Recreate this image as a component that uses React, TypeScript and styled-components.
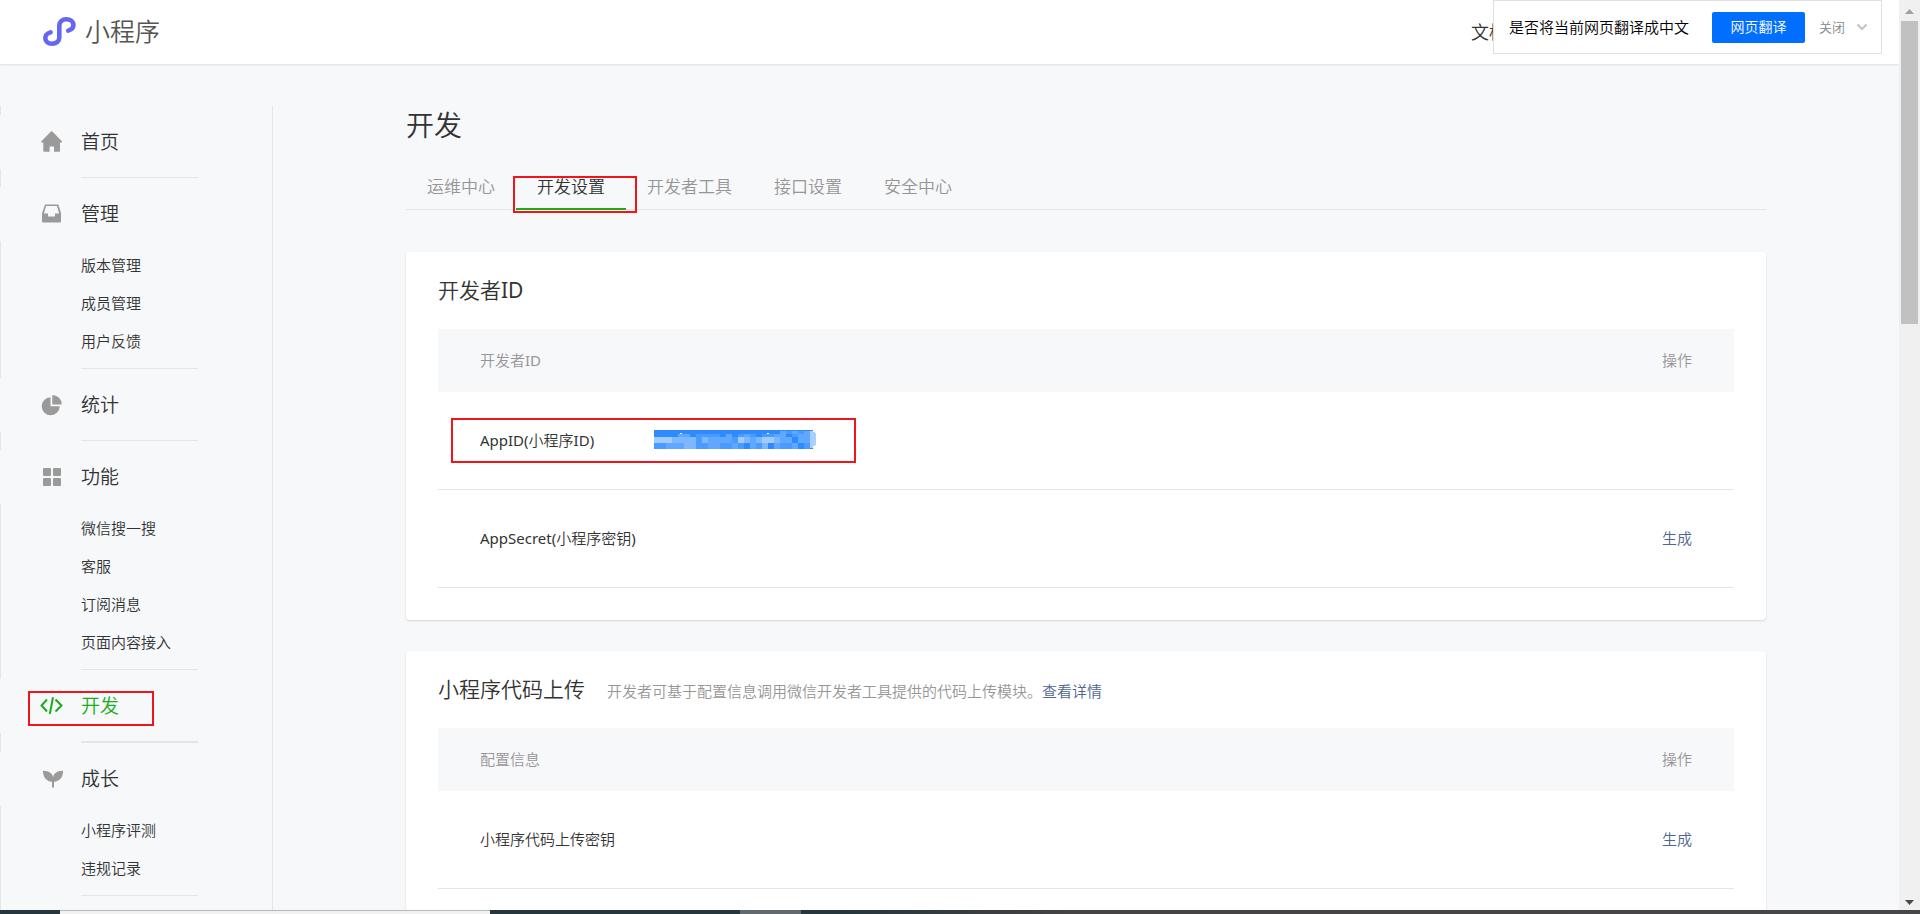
import React from "react";
import styled, { createGlobalStyle, css } from "styled-components";

const color = {
  page: "#f7f8fa",
  line: "#e4e5e8",
  text: "#333",
  muted: "#969696",
  green: "#1aad19",
  link: "#4f6592",
  mark: "#f0141b",
};

const GlobalStyle = createGlobalStyle`
  * { box-sizing: border-box; }
  body {
    margin: 0;
    background: ${color.page};
    color: ${color.text};
    font-family: "Noto Sans", "Noto Sans CJK SC", sans-serif;
    font-size: 15px;
    font-weight: 350;
    line-height: 20px;
  }
  a { color: inherit; text-decoration: none; }
  h1, h2, p, ul { margin: 0; padding: 0; font-weight: inherit; }
  ul { list-style: none; }
  button { font: inherit; border: 0; background: none; padding: 0; cursor: pointer; }
`;

/* Latin runs carry a regular weight beside the lighter Chinese text */
const Latin = styled.span`
  font-weight: 400;
`;

const Screen = styled.div`
  display: flex;
  flex-direction: column;
  height: 100vh;
  overflow: hidden;
`;

const Viewport = styled.div`
  flex: 1;
  min-height: 0;
  display: flex;
`;

const Page = styled.div`
  flex: 1;
  min-width: 0;
  overflow: hidden;
  position: relative;
`;

/* header */
const Header = styled.header`
  display: flex;
  align-items: center;
  justify-content: space-between;
  height: 64px;
  padding: 0 392px 0 42px;
  background: #fff;
  box-shadow: 0 1px 2px rgba(0, 0, 0, 0.1);
`;

const Brand = styled.a`
  display: flex;
  align-items: center;
  gap: 8px;
  height: 62px;
  align-self: flex-start;
  font-size: 25px;
  line-height: 36px;
  color: #555;
`;

const DocLink = styled.a`
  font-size: 18px;
  white-space: nowrap;
`;

const TranslateBar = styled.aside`
  position: absolute;
  top: 0;
  right: 17px;
  display: flex;
  align-items: center;
  height: 54px;
  padding: 0 13px 0 15px;
  background: #fff;
  border: 1px solid #e0e0e0;
  color: #000;
`;

const TranslateButton = styled.button`
  width: 93px;
  height: 31px;
  margin: 0 14px 0 23px;
  border-radius: 2px;
  background: #006eff;
  color: #fff;
  font-size: 14px;
`;

const CloseButton = styled.button`
  margin-right: 11px;
  color: #858585;
  font-size: 13px;
`;

const IconButton = styled.button`
  display: flex;
`;

/* layout */
const Columns = styled.div`
  display: flex;
  padding-top: 42px;
`;

const Sidebar = styled.nav`
  flex: none;
  width: 273px;
  padding-top: 9px;
  border-left: 1px solid ${color.line};
  border-right: 1px solid ${color.line};
  min-height: 100vh;
`;

const Group = styled.section`
  padding-bottom: 9px;
`;

const GroupLink = styled.a<{ $active?: boolean }>`
  position: relative;
  display: flex;
  align-items: center;
  gap: 17px;
  height: 54px;
  margin-left: -1px;
  padding-left: 40px;
  background: ${color.page};
  font-size: 19px;
  color: ${(p) => (p.$active ? color.green : color.text)};
`;

const SubList = styled.ul`
  padding: 5px 0 1px 80px;
`;

const SubLink = styled.a`
  display: block;
  line-height: 38px;
`;

const Rule = styled.hr<{ $active?: boolean; $afterList?: boolean }>`
  width: 117px;
  margin: ${(p) => (p.$afterList ? 7 : 8)}px 0 0 80px;
  border: 0;
  border-top: ${(p) => (p.$active ? 2 : 1)}px solid ${color.line};
`;

const Mark = styled.span<{ $box: "menu" | "tab" | "row" }>`
  position: absolute;
  border: 2px solid ${color.mark};
  pointer-events: none;
  ${(p) => p.$box === "menu" && css`left: 28px; top: 12px; width: 126px; height: 35px;`}
  ${(p) => p.$box === "tab" && css`left: -3px; top: 9px; width: 124px; height: 37px;`}
  ${(p) => p.$box === "row" && css`left: 13px; top: 26px; width: 405px; height: 45px;`}
`;

const Main = styled.main`
  flex: 1;
  min-width: 0;
  max-width: 1424px;
  margin: 0 auto;
  padding: 0 32px;
`;

const PageTitle = styled.h1`
  font-size: 28px;
  line-height: 38px;
`;

const Tabs = styled.nav`
  display: flex;
  height: 43px;
  margin-top: 23px;
  border-bottom: 1px solid ${color.line};
`;

const Tab = styled.a<{ $active?: boolean }>`
  position: relative;
  height: 43px;
  padding: 0 21px;
  font-size: 17px;
  line-height: 40px;
  color: ${(p) => (p.$active ? color.text : color.muted)};
  border-bottom: 2px solid ${(p) => (p.$active ? color.green : "transparent")};
`;

const Cards = styled.div`
  display: flex;
  flex-direction: column;
  gap: 31px;
  padding-top: 42px;
`;

const Card = styled.section`
  padding: 0 32px 32px;
  background: #fff;
  border-radius: 4px;
  box-shadow: 0 1px 2px rgba(0, 0, 0, 0.15);
`;

const CardHead = styled.div`
  display: flex;
  align-items: baseline;
  gap: 22px;
  height: 77px;
  line-height: 77px;
`;

const CardTitle = styled.h2`
  font-size: 21px;
`;

const CardNote = styled.p`
  color: ${color.muted};
`;

const TextLink = styled.a`
  color: ${color.link};
`;

const Table = styled.table`
  width: 100%;
  border-collapse: separate;
  border-spacing: 0;
  table-layout: fixed;
`;

const HeadCell = styled.th<{ $end?: boolean }>`
  height: 63px;
  padding: 0 42px 2px;
  background: ${color.page};
  color: ${color.muted};
  font-weight: inherit;
  text-align: ${(p) => (p.$end ? "right" : "left")};
`;

const BodyRow = styled.tr`
  position: relative;
`;

const Cell = styled.td<{ $end?: boolean }>`
  height: 98px;
  padding: 0 42px 2px;
  border-bottom: 1px solid ${color.line};
  text-align: ${(p) => (p.$end ? "right" : "left")};
`;

const Field = styled.div`
  display: flex;
  align-items: center;
`;

const FieldName = styled.span`
  flex: none;
  width: 174px;
  white-space: nowrap;
`;

/* window chrome */
const Scrollbar = styled.div`
  flex: none;
  display: flex;
  flex-direction: column;
  align-items: center;
  width: 21px;
  background: #f0f0f0;
`;

const ScrollArrow = styled.svg`
  flex: none;
  width: 21px;
  height: 21px;
`;

const ScrollTrack = styled.div`
  flex: 1;
`;

const ScrollThumb = styled.div`
  width: 17px;
  height: 303px;
  background: #c1c1c1;
`;

const Taskbar = styled.footer`
  flex: none;
  display: flex;
  height: 4px;
  background: linear-gradient(90deg, #25363d 0 44%, #464344 56%, #474648);
`;

const TaskSlot = styled.span<{ $kind: "start" | "search" | "apps" | "window" }>`
  ${(p) => p.$kind === "start" && css`width: 60px;`}
  ${(p) => p.$kind === "search" && css`width: 430px; background: #f2f2f2; border-top: 1px solid #b8b8b8;`}
  ${(p) => p.$kind === "apps" && css`width: 250px;`}
  ${(p) => p.$kind === "window" && css`width: 61px; background: #626a70;`}
`;

const Logo = () => (
  <svg width="35" height="31" viewBox="0 0 35 31" fill="none" stroke="#6467f0" strokeWidth="4.6" strokeLinecap="round">
    <path d="M8.600 16.400C5.300 17.300 3.300 19.300 3.300 22C3.300 25.400 6.200 27.700 10 27.700C14.400 27.700 17.300 25.200 17.300 21.600V9.400C17.300 5.800 20.200 3.300 24.300 3.300C28.400 3.300 31.400 5.600 31.400 9C31.400 11.800 29.400 13.700 26.200 14.600" />
  </svg>
);

type IconName = "home" | "inbox" | "pie" | "grid" | "code" | "sprout";

const shapes: Record<IconName, React.ReactNode> = {
  home: <path d="M11.600 1.200a1 1 0 0 1 .8.3l9.700 10c.3.400.1.900-.4.900H20V21a.7.700 0 0 1-.7.700H14V16.500H9.600V21.700H4a.7.700 0 0 1-.7-.7V12.400H1.600c-.5 0-.7-.5-.4-.9l9.700-10a1 1 0 0 1 .7-.3Z" />,
  inbox: (
    <path
      d="M5 2.500h13.400L21 11.300V19.500a1 1 0 0 1-1 1H3a1 1 0 0 1-1-1v-8.200ZM6.100 4L3.900 11.500H8v2.200c0 .6.3.900.900.900h5.200c.6 0 .9-.3.900-.900V11.500h4.100L17 4Z"
      fillRule="evenodd"
    />
  ),
  pie: (
    <>
      <path d="M10.500 4.200v9h9.200a9 9 0 1 1-9.200-9Z" />
      <path d="M12.300 2a9.500 9.500 0 0 1 9.500 9.500h-9.500Z" />
    </>
  ),
  grid: (
    <>
      <rect x="3" y="3" width="8" height="8" rx="1" />
      <rect x="13" y="3" width="8" height="8" rx="1" />
      <rect x="3" y="13" width="8" height="8" rx="1" />
      <rect x="13" y="13" width="8" height="8" rx="1" />
    </>
  ),
  code: (
    <g fill="none" stroke={color.green} strokeWidth="2">
      <path d="M7 5.500L1.500 11.500L7 17.500M15.500 5.500L21.500 11.500L15.500 17.500M13 3.200L9.800 20" />
    </g>
  ),
  sprout: (
    <path d="M3 3.700C8.500 3.500 12.500 6.300 13.200 10.500C13.500 6.300 17.500 3.500 23 3.700C23.400 10 19.500 14.300 14 14.800V20.500H12V14.800C6.500 14.300 2.800 10 3 3.700Z" />
  ),
};

const MenuIcon = ({ name }: { name: IconName }) => (
  <svg width="24" height="24" viewBox="0 0 24 24" fill="#9a9a9a" aria-hidden="true">
    {shapes[name]}
  </svg>
);

/* censored value: a selection highlight with mosaic tiles over it */
const tileRows: [number, number, string][] = [
  [1, 3, ".....................212121"],
  [4, 3, "....22.1111.2.121.1122.1221"],
  [7, 6, "44433331322221432344322.221"],
  [13, 6, "112223311221121.213.2112.11"],
];
const tileFill: Record<string, string> = { "1": "#4a9bff", "2": "#60a8ff", "3": "#7db7ff", "4": "#a0cbff" };

const Mosaic = () => (
  <svg width="162" height="19" viewBox="0 0 162 19" shapeRendering="crispEdges" role="img" aria-label="AppID">
    <rect width="159" height="19" fill="#2e8bff" />
    {tileRows.map(([y, h, row]) =>
      row
        .slice(0, 26)
        .split("")
        .map((c, i) =>
          c === "." ? null : <rect key={`${y}-${i}`} x={i * 6} y={y} width="6" height={h} fill={tileFill[c]} />
        )
    )}
    <path d="M156 1h3v1h2v1h1v12h-1v1h-2v2h-3Z" fill="#a9d0ff" />
    <path d="M26 3h2v1h-2ZM113 3h2v1h-2Z" fill="#fff" />
  </svg>
);

const menu: { title: string; icon: IconName; active?: boolean; items: string[] }[] = [
  { title: "首页", icon: "home", items: [] },
  { title: "管理", icon: "inbox", items: ["版本管理", "成员管理", "用户反馈"] },
  { title: "统计", icon: "pie", items: [] },
  { title: "功能", icon: "grid", items: ["微信搜一搜", "客服", "订阅消息", "页面内容接入"] },
  { title: "开发", icon: "code", active: true, items: [] },
  { title: "成长", icon: "sprout", items: ["小程序评测", "违规记录"] },
];

const tabs = ["运维中心", "开发设置", "开发者工具", "接口设置", "安全中心"];

export default function App() {
  return (
    <Screen>
      <GlobalStyle />
      <Viewport>
        <Page>
          <Header>
            <Brand href="#">
              <Logo />
              小程序
            </Brand>
            <DocLink href="#">文档</DocLink>
          </Header>
          <TranslateBar>
            是否将当前网页翻译成中文
            <TranslateButton>网页翻译</TranslateButton>
            <CloseButton>关闭</CloseButton>
            <IconButton aria-label="更多">
              <svg width="12" height="8" viewBox="0 0 12 8" fill="none" stroke="#c4c4c4" strokeWidth="2">
                <path d="M1.500 1.500L6 6L10.500 1.500" />
              </svg>
            </IconButton>
          </TranslateBar>
          <Columns>
            <Sidebar>
              {menu.map((group) => (
                <Group key={group.title}>
                  <GroupLink href="#" $active={group.active}>
                    <MenuIcon name={group.icon} />
                    {group.title}
                    {group.active && <Mark $box="menu" />}
                  </GroupLink>
                  {group.items.length > 0 && (
                    <SubList>
                      {group.items.map((item) => (
                        <li key={item}>
                          <SubLink href="#">{item}</SubLink>
                        </li>
                      ))}
                    </SubList>
                  )}
                  <Rule $active={group.active} $afterList={group.items.length > 0} />
                </Group>
              ))}
            </Sidebar>
            <Main>
              <PageTitle>开发</PageTitle>
              <Tabs>
                {tabs.map((tab) => (
                  <Tab key={tab} href="#" $active={tab === "开发设置"}>
                    {tab}
                    {tab === "开发设置" && <Mark $box="tab" />}
                  </Tab>
                ))}
              </Tabs>
              <Cards>
                <Card>
                  <CardHead>
                    <CardTitle>
                      开发者<Latin>ID</Latin>
                    </CardTitle>
                  </CardHead>
                  <Table>
                    <thead>
                      <tr>
                        <HeadCell>
                          开发者<Latin>ID</Latin>
                        </HeadCell>
                        <HeadCell $end>操作</HeadCell>
                      </tr>
                    </thead>
                    <tbody>
                      <BodyRow>
                        <Cell>
                          <Field>
                            <FieldName>
                              <Latin>AppID(</Latin>小程序<Latin>ID)</Latin>
                            </FieldName>
                            <Mosaic />
                          </Field>
                          <Mark $box="row" />
                        </Cell>
                        <Cell $end />
                      </BodyRow>
                      <BodyRow>
                        <Cell>
                          <Latin>AppSecret(</Latin>小程序密钥<Latin>)</Latin>
                        </Cell>
                        <Cell $end>
                          <TextLink href="#">生成</TextLink>
                        </Cell>
                      </BodyRow>
                    </tbody>
                  </Table>
                </Card>
                <Card>
                  <CardHead>
                    <CardTitle>小程序代码上传</CardTitle>
                    <CardNote>
                      开发者可基于配置信息调用微信开发者工具提供的代码上传模块。
                      <TextLink href="#">查看详情</TextLink>
                    </CardNote>
                  </CardHead>
                  <Table>
                    <thead>
                      <tr>
                        <HeadCell>配置信息</HeadCell>
                        <HeadCell $end>操作</HeadCell>
                      </tr>
                    </thead>
                    <tbody>
                      <BodyRow>
                        <Cell>小程序代码上传密钥</Cell>
                        <Cell $end>
                          <TextLink href="#">生成</TextLink>
                        </Cell>
                      </BodyRow>
                    </tbody>
                  </Table>
                </Card>
              </Cards>
            </Main>
          </Columns>
        </Page>
        <Scrollbar aria-hidden="true">
          <ScrollArrow viewBox="0 0 21 21">
            <path d="M6 14h9l-4.500-5Z" fill="#a0a0a0" />
          </ScrollArrow>
          <ScrollTrack>
            <ScrollThumb />
          </ScrollTrack>
          <ScrollArrow viewBox="0 0 21 21">
            <path d="M6 11h9l-4.500 5Z" fill="#4a4a4a" />
          </ScrollArrow>
        </Scrollbar>
      </Viewport>
      <Taskbar aria-hidden="true">
        <TaskSlot $kind="start" />
        <TaskSlot $kind="search" />
        <TaskSlot $kind="apps" />
        <TaskSlot $kind="window" />
      </Taskbar>
    </Screen>
  );
}
